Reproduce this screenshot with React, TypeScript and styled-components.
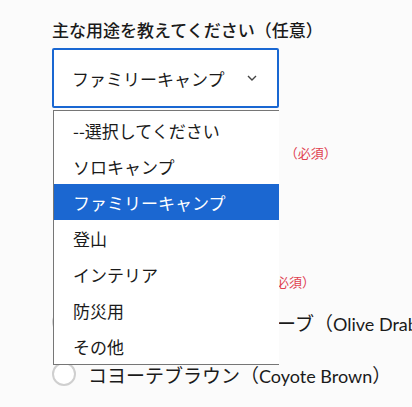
import * as React from 'react';
import styled, {createGlobalStyle} from 'styled-components';

const GlobalStyle = createGlobalStyle`
    body {
        margin: 0;
        background: #ffffff;
        font-family: "Noto Sans CJK JP", "Noto Sans", sans-serif;
        color: #1f1f1f;
    }
`;

const Page = styled.div`
    position: relative;
    width: 412px;
    height: 407px;
    box-sizing: border-box;
    padding: 18px 0 0 52px;
    background: #fbfbfb;
    overflow: hidden;
`;

const FieldLabel = styled.div`
    font-size: 17px;
    font-weight: 500;
    line-height: 24px;
    color: #1a1a1a;
`;

const SelectBox = styled.div`
    margin-top: 6px;
    width: 227px;
    height: 60px;
    box-sizing: border-box;
    border: 2px solid #1967d2;
    border-radius: 2px;
    background: #ffffff;
    display: flex;
    align-items: center;
    padding: 0 20px 0 18px;
    font-size: 17px;
    color: #1a1a1a;
`;

const SelectValue = styled.span`
    flex: 1;
`;

const Chevron = () => (
    <svg width="10" height="6" viewBox="0 0 10 6">
        <path d="M1 1 L5 5 L9 1" fill="none" stroke="#444" strokeWidth="1.4" />
    </svg>
);

const Dropdown = styled.ul`
    position: absolute;
    left: 53px;
    top: 110px;
    width: 226px;
    margin: 0;
    padding: 1px 0 0;
    list-style: none;
    background: #ffffff;
    border: 1px solid #767676;
    border-right: none;
    box-sizing: border-box;
`;

const Option = styled.li<{$active?: boolean}>`
    height: 36px;
    display: flex;
    align-items: center;
    padding-left: 19px;
    font-size: 17px;
    color: ${p => (p.$active ? '#ffffff' : '#1a1a1a')};
    background: ${p => (p.$active ? '#1b67d1' : 'transparent')};
`;

const Row = styled.div<{$top: number}>`
    margin-top: ${p => p.$top}px;
    display: flex;
    align-items: center;
    height: 22px;
    white-space: nowrap;
`;

const RowTitle = styled.span`
    font-size: 17px;
    font-weight: 500;
`;

const Required = styled.span<{$gap: number}>`
    margin-left: ${p => p.$gap}px;
    font-size: 13px;
    color: #e0404f;
`;

const RadioRow = styled.label<{$top: number}>`
    margin-top: ${p => p.$top}px;
    display: flex;
    align-items: center;
    gap: 12px;
    height: 24px;
    font-size: 19px;
    color: #1a1a1a;
    white-space: nowrap;
`;

const RadioCircle = styled.span`
    flex: none;
    width: 24px;
    height: 24px;
    box-sizing: border-box;
    border: 2px solid #cfcfcf;
    border-radius: 50%;
    background: #ffffff;
`;

const RadioText = styled.span``;

const Latin = styled.span`
    font-family: Lato, "Noto Sans", sans-serif;
    font-size: 18px;
`;

const options = ['--選択してください', 'ソロキャンプ', 'ファミリーキャンプ', '登山', 'インテリア', '防災用', 'その他'];

const App: React.FC = () => {
    const selected = 'ファミリーキャンプ';

    return (
        <>
            <GlobalStyle />
            <Page>
                <FieldLabel>主な用途を教えてください（任意）</FieldLabel>
                <SelectBox>
                    <SelectValue>{selected}</SelectValue>
                    <Chevron />
                </SelectBox>

                <Row $top={33}>
                    <RowTitle>ご利用人数を教えてください</RowTitle>
                    <Required $gap={13}>（必須）</Required>
                </Row>
                <Row $top={107}>
                    <RowTitle>ご連絡先をご記入ください</RowTitle>
                    <Required $gap={7}>（必須）</Required>
                </Row>
                <RadioRow $top={18}>
                    <RadioCircle />
                    <RadioText>
                        モスグリーン系のオリーブ（<Latin>Olive Drab</Latin>）
                    </RadioText>
                </RadioRow>
                <RadioRow $top={28}>
                    <RadioCircle />
                    <RadioText>
                        コヨーテブラウン（<Latin>Coyote Brown</Latin>）
                    </RadioText>
                </RadioRow>

                <Dropdown>
                    {options.map(o => (
                        <Option key={o} $active={o === selected}>
                            {o}
                        </Option>
                    ))}
                </Dropdown>
            </Page>
        </>
    );
};

export default App;
